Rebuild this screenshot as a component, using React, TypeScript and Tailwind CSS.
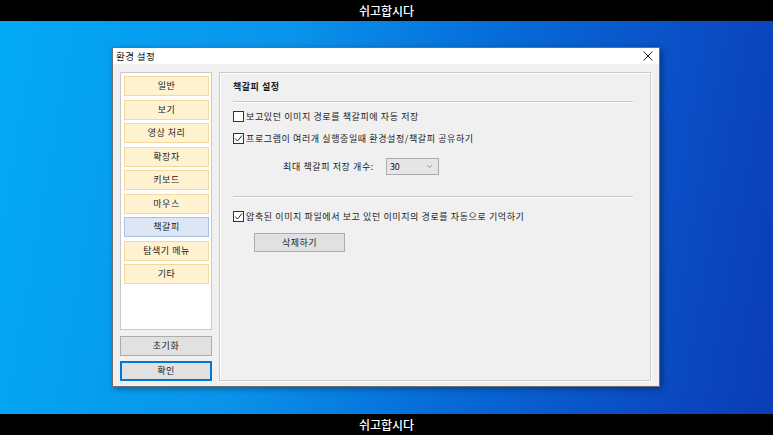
import { ChevronDown } from "lucide-react";

const font = "font-['Noto_Sans_CJK_KR','Noto_Sans',sans-serif]";

const menu = ["일반", "보기", "영상 처리", "확장자", "키보드", "마우스", "책갈피", "탐색기 메뉴", "기타"];

const Check = ({ checked }: { checked: boolean }) => (
    <span className="w-[11px] h-[11px] border border-[#333] bg-white flex items-center justify-center shrink-0">
        {checked && (
            <svg width="9" height="9" viewBox="0 0 9 9">
                <path d="M1 4.5 L3.5 7 L8 1.5" fill="none" stroke="#222" strokeWidth="1" />
            </svg>
        )}
    </span>
);

const Row = ({ checked, label }: { checked: boolean; label: string }) => (
    <label className="flex items-center gap-[2px] h-[14px]">
        <Check checked={checked} />
        <span className="text-[9px] tracking-[0.6px] text-[#1a1a1a] leading-none">{label}</span>
    </label>
);

const App = () => {
    return (
        <div className={`${font} w-[773px] h-[435px] flex flex-col bg-black overflow-hidden`}>
            <div className="h-[21px] flex items-center justify-center text-white text-[12px] font-medium">쉬고합시다</div>

            <div className="flex-1 pl-[112px] pt-[26px] bg-[linear-gradient(100deg,#03aaf5_0%,#0a93ea_35%,#066bd8_60%,#0a4fc6_82%,#0a3db6_100%)]">
                <div className="w-[548px] h-[340px] flex flex-col border border-[#6f6f6f] bg-[#f0f0f0] shadow-[2px_2px_6px_rgba(0,0,0,0.35)]">
                    {/* title bar */}
                    <div className="h-[18px] bg-white flex items-center justify-between pl-[3px] pr-[6px]">
                        <span className="text-[9.5px] tracking-[0.4px] text-[#111]">환경 설정</span>
                        <svg width="10" height="10" viewBox="0 0 10 10">
                            <path d="M0.5 0.5 L9.5 9.5 M9.5 0.5 L0.5 9.5" stroke="#222" strokeWidth="1" />
                        </svg>
                    </div>

                    <div className="flex-1 flex pl-[7px] pr-[8px] pt-[8px] pb-[5px] gap-[7px]">
                        {/* left column */}
                        <div className="w-[92px] flex flex-col">
                            <div className="h-[258px] bg-white border border-[#c9c9c9] pt-[3px] pl-[3px] flex flex-col gap-[3.5px]">
                                {menu.map((m) => (
                                    <div
                                        key={m}
                                        className={
                                            m === "책갈피"
                                                ? "w-[85px] h-[20px] flex items-center justify-center text-[9px] tracking-[0.5px] text-[#222] bg-[#dde6f4] border border-[#a9c1e8]"
                                                : "w-[85px] h-[20px] flex items-center justify-center text-[9px] tracking-[0.5px] text-[#222] bg-[#fff2d0] border border-[#f4d89c]"
                                        }
                                    >
                                        {m}
                                    </div>
                                ))}
                            </div>
                            <button className="mt-[6px] h-[20px] bg-[#e1e1e1] border border-[#adadad] text-[9px] tracking-[0.5px] text-[#222] flex items-center justify-center">초기화</button>
                            <button className="mt-[5px] h-[20px] bg-[#e1e1e1] border-2 border-[#0078d7] text-[9px] tracking-[0.5px] text-[#222] flex items-center justify-center">확인</button>
                        </div>

                        {/* right panel */}
                        <div className="flex-1 border border-[#c8c8c8] shadow-[inset_1px_1px_0_#ffffff,1px_1px_0_#ffffff] pl-[13px] pr-[17px] pt-[7px]">
                            <div className="text-[9px] tracking-[0.5px] font-bold text-[#1a1a1a] h-[14px] flex items-center">책갈피 설정</div>
                            <div className="mt-[7px] h-px bg-[#c4c4c4] shadow-[0_1px_0_#ffffff]" />
                            <div className="mt-[7px] flex flex-col gap-[8px]">
                                <Row checked={false} label="보고있던 이미지 경로를 책갈피에 자동 저장" />
                                <Row checked={true} label="프로그램이 여러개 실행중일때 환경설정/책갈피 공유하기" />
                            </div>
                            <div className="mt-[13px] flex items-center pl-[50px] gap-[12px]">
                                <span className="text-[9px] tracking-[0.6px] text-[#1a1a1a]">최대 책갈피 저장 개수:</span>
                                <div className="w-[53px] h-[17px] bg-[#e6e6e6] border border-[#acacac] flex items-center justify-between pl-[3px] pr-[4px]">
                                    <span className="text-[9px] text-[#111]">30</span>
                                    <ChevronDown size={9} strokeWidth={1.5} color="#555" />
                                </div>
                            </div>
                            <div className="mt-[21px] h-px bg-[#c4c4c4] shadow-[0_1px_0_#ffffff]" />
                            <div className="mt-[12px]">
                                <Row checked={true} label="압축된 이미지 파일에서 보고 있던 이미지의 경로를 자동으로 기억하기" />
                            </div>
                            <button className="mt-[10px] ml-[21px] w-[91px] h-[19px] bg-[#e1e1e1] border border-[#adadad] text-[9px] tracking-[0.5px] text-[#222] flex items-center justify-center">삭제하기</button>
                        </div>
                    </div>
                </div>
            </div>

            <div className="h-[21px] flex items-center justify-center text-white text-[12px] font-medium">쉬고합시다</div>
        </div>
    );
};

export default App;
